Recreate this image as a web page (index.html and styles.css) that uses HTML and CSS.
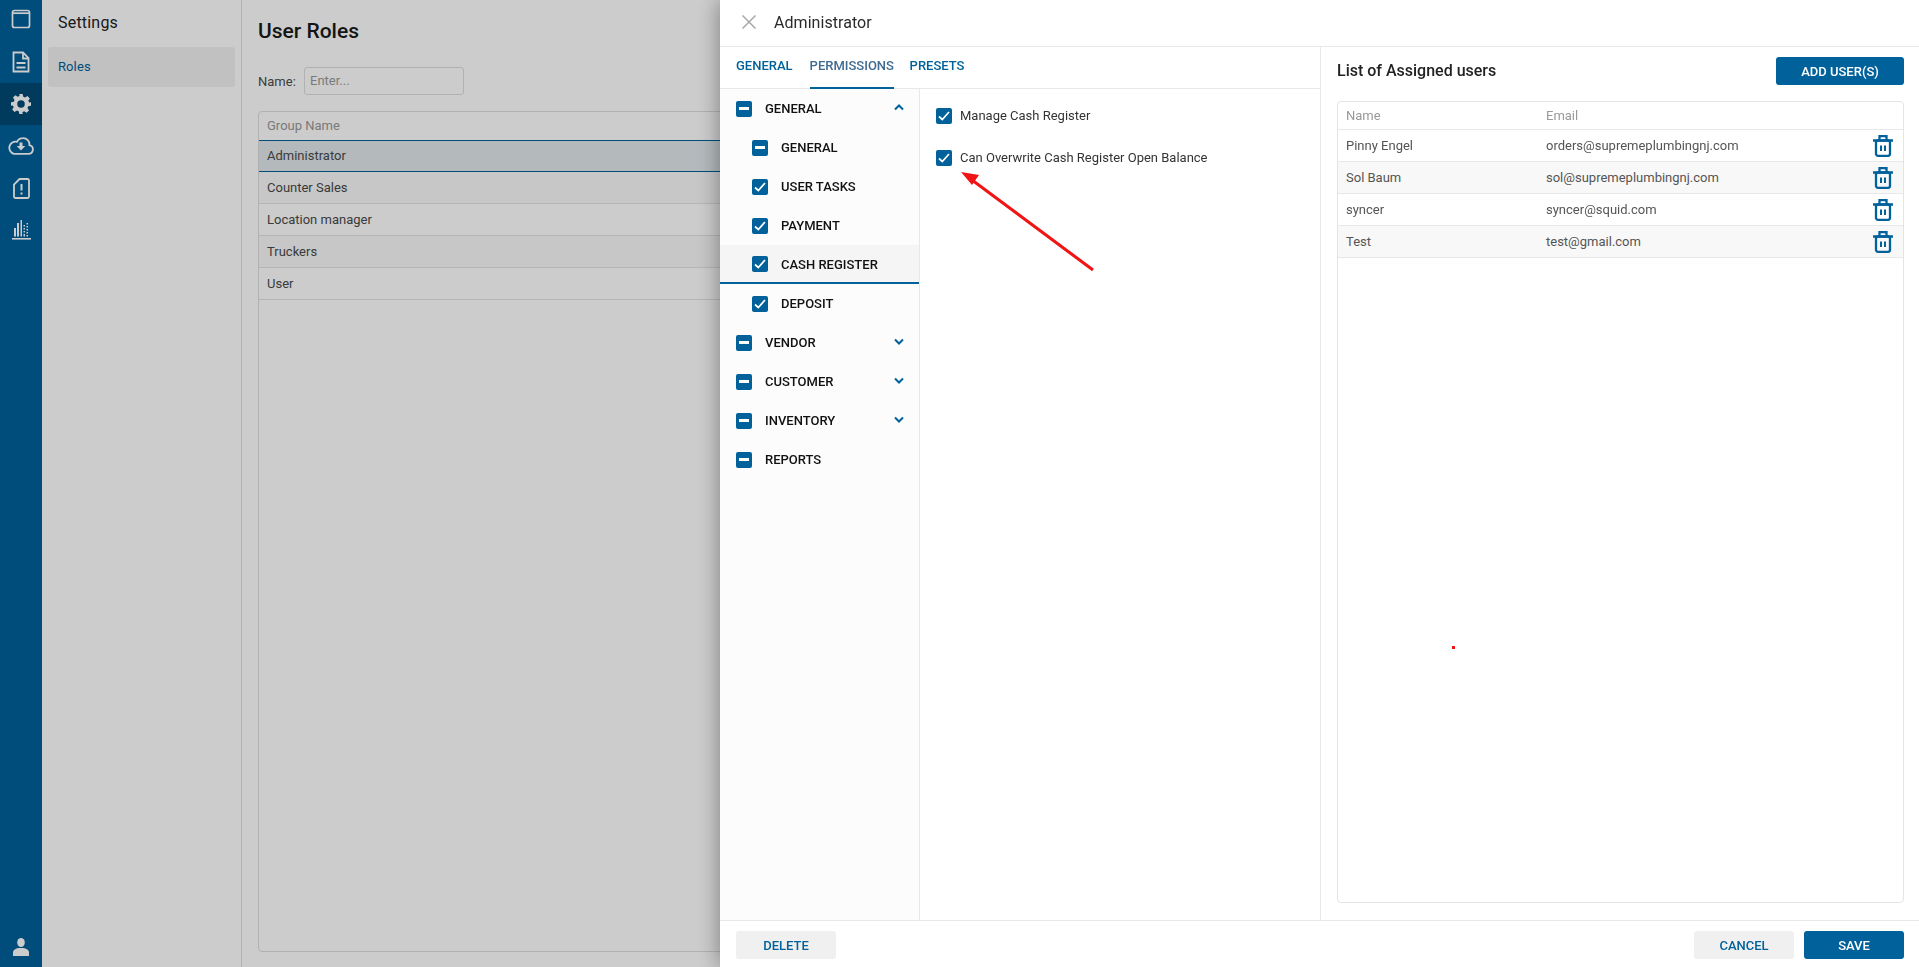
FILE: index.html
```html
<!DOCTYPE html>
<html lang="en">
<head>
<meta charset="utf-8">
<title>User Roles</title>
<link rel="stylesheet" href="styles.css">
</head>
<body>
<div class="app">
  <nav class="rail">
    <div class="rail-top">
      <a class="rail-item first"><svg width="20" height="20" viewBox="0 0 20 20" fill="none" stroke="#ccc" stroke-width="1.7"><rect x="1.5" y="1.5" width="17" height="17" rx="2"/><path d="M1.5 4.2h17"/></svg></a>
      <a class="rail-item"><svg width="18" height="22" viewBox="0 0 18 22" fill="none" stroke="#ccc" stroke-width="1.8"><path d="M1.5 1.5h9.5l5.5 5.5v13.5h-15z"/><path d="M11 1.5v6h5.5" /><path d="M4.5 12h9M4.5 16.5h9" stroke-width="2"/></svg></a>
      <a class="rail-item active"><svg width="20" height="20" viewBox="0 0 24 24"><path fill="#ccc" fill-rule="evenodd" d="M10 0h4l.7 3.3 2.2.9 2.8-1.8 2.9 2.9-1.8 2.8.9 2.2L24 10v4l-3.3.7-.9 2.2 1.8 2.8-2.9 2.9-2.8-1.8-2.2.9L14 24h-4l-.7-3.3-2.2-.9-2.8 1.8-2.9-2.9 1.8-2.8-.9-2.2L0 14v-4l3.3-.7.9-2.2-1.8-2.8 2.9-2.9 2.8 1.8 2.2-.9zM12 7.5a4.5 4.5 0 1 0 0 9 4.5 4.5 0 0 0 0-9z"/></svg></a>
      <a class="rail-item"><svg width="26" height="18" viewBox="0 0 26 18"><path fill="none" stroke="#ccc" stroke-width="1.8" d="M6 16.8h14.5a4.4 4.4 0 0 0 .9-8.7A6.2 6.2 0 0 0 15 1.2a6.8 6.8 0 0 0-6 3.6 5.3 5.3 0 0 0-3 12z"/><path fill="#ccc" d="M11.5 5.5h3v3.5h2.8l-4.3 4.5-4.3-4.5h2.8z"/></svg></a>
      <a class="rail-item"><svg width="17" height="21" viewBox="0 0 17 21" fill="none" stroke="#ccc" stroke-width="1.8"><path d="M6.5 1H14.5a1.5 1.5 0 0 1 1.5 1.5v16a1.5 1.5 0 0 1-1.5 1.5h-12A1.5 1.5 0 0 1 1 18.500V6.500z"/><path d="M8.500 6v6.500M8.500 14.500v2" stroke-width="2"/></svg></a>
      <a class="rail-item"><svg width="19" height="20" viewBox="0 0 19 20" fill="#ccc"><rect x="0" y="18" width="19" height="1.6"/><rect x="2" y="8" width="2" height="8.500"/><rect x="5" y="3" width="2" height="13.500"/><rect x="8.500" y="0" width="1.500" height="16.500"/><path d="M11.500 5h1.500v1.500h-1.500zM11.500 8h1.500v1.500h-1.500zM11.500 11h1.500v1.500h-1.500zM11.500 14h1.500v2.500h-1.500zM14.500 3h1.500v1.500h-1.500zM14.500 6h1.500v1.500h-1.500zM14.500 9h1.500v1.500h-1.500zM14.500 12h1.500v1.500h-1.500zM14.500 15h1.500v1.500h-1.500z"/></svg></a>
    </div>
    <a class="rail-user"><svg width="18" height="18" viewBox="0 0 18 18" fill="#ccc"><ellipse cx="9" cy="4.500" rx="3.800" ry="4.500"/><path d="M1 18v-3.500c0-2.500 3-4 5.500-4.500h5c2.500.5 5.500 2 5.500 4.500V18z"/></svg></a>
  </nav>

  <aside class="settings">
    <h2 class="settings-title">Settings</h2>
    <a class="settings-link">Roles</a>
  </aside>

  <main class="roles">
    <h1 class="roles-title">User Roles</h1>
    <div class="filter">
      <label class="filter-label">Name:</label>
      <div class="filter-input">Enter...</div>
    </div>
    <section class="grid">
      <div class="grid-head">Group Name</div>
      <div class="grid-row selected">Administrator</div>
      <div class="grid-row alt">Counter Sales</div>
      <div class="grid-row">Location manager</div>
      <div class="grid-row alt">Truckers</div>
      <div class="grid-row">User</div>
    </section>
  </main>
</div>

<div class="overlay"></div>

<div class="drawer">
  <header class="drawer-head">
    <svg class="close" width="14" height="14" viewBox="0 0 14 14" fill="none" stroke="#a8a8a8" stroke-width="1.500"><path d="M.5.5l13 13M13.500.5l-13 13"/></svg>
    <span class="drawer-title">Administrator</span>
  </header>
  <div class="drawer-body">
    <div class="col-left">
      <div class="tabs">
        <a class="tab">GENERAL</a>
        <a class="tab active">PERMISSIONS</a>
        <a class="tab">PRESETS</a>
      </div>
      <div class="perm">
        <ul class="tree">
          <li class="node"><span class="box"><i class="dash"></i></span><span class="node-label">GENERAL</span><svg class="chev" width="10" height="7" viewBox="0 0 10 7" fill="none" stroke="#00619b" stroke-width="2"><path d="M1 5.500l4-4 4 4"/></svg></li>
          <li class="node sub"><span class="box"><i class="dash"></i></span><span class="node-label">GENERAL</span></li>
          <li class="node sub"><span class="box"><svg class="tick" width="12" height="10" viewBox="0 0 12 10" fill="none" stroke="#fff" stroke-width="1.700"><path d="M1 5.500l3.300 3L11 1"/></svg></span><span class="node-label">USER TASKS</span></li>
          <li class="node sub"><span class="box"><svg class="tick" width="12" height="10" viewBox="0 0 12 10" fill="none" stroke="#fff" stroke-width="1.700"><path d="M1 5.500l3.300 3L11 1"/></svg></span><span class="node-label">PAYMENT</span></li>
          <li class="node sub current"><span class="box"><svg class="tick" width="12" height="10" viewBox="0 0 12 10" fill="none" stroke="#fff" stroke-width="1.700"><path d="M1 5.500l3.300 3L11 1"/></svg></span><span class="node-label">CASH REGISTER</span></li>
          <li class="node sub"><span class="box"><svg class="tick" width="12" height="10" viewBox="0 0 12 10" fill="none" stroke="#fff" stroke-width="1.700"><path d="M1 5.500l3.300 3L11 1"/></svg></span><span class="node-label">DEPOSIT</span></li>
          <li class="node"><span class="box"><i class="dash"></i></span><span class="node-label">VENDOR</span><svg class="chev" width="10" height="7" viewBox="0 0 10 7" fill="none" stroke="#00619b" stroke-width="2"><path d="M1 1.500l4 4 4-4"/></svg></li>
          <li class="node"><span class="box"><i class="dash"></i></span><span class="node-label">CUSTOMER</span><svg class="chev" width="10" height="7" viewBox="0 0 10 7" fill="none" stroke="#00619b" stroke-width="2"><path d="M1 1.500l4 4 4-4"/></svg></li>
          <li class="node"><span class="box"><i class="dash"></i></span><span class="node-label">INVENTORY</span><svg class="chev" width="10" height="7" viewBox="0 0 10 7" fill="none" stroke="#00619b" stroke-width="2"><path d="M1 1.500l4 4 4-4"/></svg></li>
          <li class="node"><span class="box"><i class="dash"></i></span><span class="node-label">REPORTS</span></li>
        </ul>
        <div class="options">
          <label class="option"><span class="box"><svg class="tick" width="12" height="10" viewBox="0 0 12 10" fill="none" stroke="#fff" stroke-width="1.700"><path d="M1 5.500l3.300 3L11 1"/></svg></span><span class="option-text">Manage Cash Register</span></label>
          <label class="option"><span class="box"><svg class="tick" width="12" height="10" viewBox="0 0 12 10" fill="none" stroke="#fff" stroke-width="1.700"><path d="M1 5.500l3.300 3L11 1"/></svg></span><span class="option-text">Can Overwrite Cash Register Open Balance</span></label>
        </div>
      </div>
    </div>
    <div class="col-right">
      <div class="assign-head">
        <h3 class="assign-title">List of Assigned users</h3>
        <button class="btn primary wide">ADD USER(S)</button>
      </div>
      <div class="users">
        <div class="users-head"><span class="c-name">Name</span><span class="c-mail">Email</span></div>
        <div class="user-row"><span class="c-name">Pinny Engel</span><span class="c-mail">orders@supremeplumbingnj.com</span><svg class="trash" width="20" height="22" viewBox="0 0 20 22" fill="none" stroke="#00619b" stroke-width="2.300"><path d="M0 5.500h20M6.500 5V1.200h7V5"/><rect x="3" y="5.500" width="14" height="15.300" rx="2"/><path d="M8 10.500v5.500M12 10.500v5.500" stroke-width="2"/></svg></div>
        <div class="user-row alt"><span class="c-name">Sol Baum</span><span class="c-mail">sol@supremeplumbingnj.com</span><svg class="trash" width="20" height="22" viewBox="0 0 20 22" fill="none" stroke="#00619b" stroke-width="2.300"><path d="M0 5.500h20M6.500 5V1.200h7V5"/><rect x="3" y="5.500" width="14" height="15.300" rx="2"/><path d="M8 10.500v5.500M12 10.500v5.500" stroke-width="2"/></svg></div>
        <div class="user-row"><span class="c-name">syncer</span><span class="c-mail">syncer@squid.com</span><svg class="trash" width="20" height="22" viewBox="0 0 20 22" fill="none" stroke="#00619b" stroke-width="2.300"><path d="M0 5.500h20M6.500 5V1.200h7V5"/><rect x="3" y="5.500" width="14" height="15.300" rx="2"/><path d="M8 10.500v5.500M12 10.500v5.500" stroke-width="2"/></svg></div>
        <div class="user-row alt"><span class="c-name">Test</span><span class="c-mail">test@gmail.com</span><svg class="trash" width="20" height="22" viewBox="0 0 20 22" fill="none" stroke="#00619b" stroke-width="2.300"><path d="M0 5.500h20M6.500 5V1.200h7V5"/><rect x="3" y="5.500" width="14" height="15.300" rx="2"/><path d="M8 10.500v5.500M12 10.500v5.500" stroke-width="2"/></svg></div>
      </div>
    </div>
  </div>
  <footer class="drawer-foot">
    <button class="btn plain">DELETE</button>
    <div class="foot-actions">
      <button class="btn plain">CANCEL</button>
      <button class="btn primary">SAVE</button>
    </div>
  </footer>
</div>

<svg class="annotation" width="1919" height="967" viewBox="0 0 1919 967">
  <path d="M1093 270L972 180" stroke="#f01414" stroke-width="3" fill="none"/>
  <path d="M961 172l18 3-7 10z" fill="#f01414"/>
  <rect x="1452" y="646" width="3" height="3" fill="#f01414"/>
</svg>
</body>
</html>
```
FILE: styles.css
```css
* { box-sizing: border-box; }
html, body { margin: 0; height: 100%; overflow: hidden; }
body { font-family: Roboto, "Liberation Sans", sans-serif; font-size: 13px; color: #333; background: #fff; }
h1, h2, h3 { margin: 0; font-weight: 400; }
ul { margin: 0; padding: 0; list-style: none; }

.app { display: flex; height: 967px; }

.rail { width: 42px; flex: none; background: #00619b; display: flex; flex-direction: column; justify-content: space-between; }
.rail-item { display: flex; align-items: center; justify-content: center; height: 42px; }
.rail-item.first { height: 41px; padding-bottom: 3px; }
.rail-item.active { background: #004a76; }
.rail-item svg, .rail-user svg { filter: brightness(1.25); }
.rail-user { display: flex; justify-content: center; padding-bottom: 11px; }

.settings { width: 200px; flex: none; border-right: 1px solid #e0e0e0; padding: 0 6px; }
.settings-title { font-size: 16px; color: #222; line-height: 46px; padding-left: 10px; height: 47px; letter-spacing: .2px; }
.settings-link { display: block; height: 40px; line-height: 40px; padding-left: 10px; border-radius: 3px; background: #f2f2f2; color: #00619b; font-size: 13px; letter-spacing: .1px; }

.roles { flex: 1; padding: 0 0 15px 16px; display: flex; flex-direction: column; }
.roles-title { font-size: 21px; font-weight: 500; color: #1a1a1a; line-height: 24px; padding-top: 19px; height: 67px; }
.filter { display: flex; align-items: center; height: 28px; margin-bottom: 16px; }
.filter-label { width: 46px; color: #4d4d4d; }
.filter-input { width: 160px; height: 28px; line-height: 26px; padding-left: 5px; border: 1px solid #dedede; border-radius: 3px; color: #9a9a9a; }
.grid { flex: 1; border: 1px solid #dedede; border-radius: 4px; }
.grid-head { height: 28px; line-height: 27px; padding-left: 8px; color: #999; }
.grid-row { height: 32px; line-height: 31px; padding-left: 8px; border-bottom: 1px solid #e3e3e3; color: #4a4a4a; }
.grid-row.alt { background: #f9f9f9; }
.grid-row.selected { background: #e1e8ec; border-top: 1px solid #00619b; border-bottom: 1px solid #00619b; line-height: 30px; }

.overlay { position: fixed; inset: 0; background: rgba(0, 0, 0, .2); }

.drawer { position: fixed; top: 0; right: 0; bottom: 0; width: 1199px; background: #fff; box-shadow: 0 0 22px rgba(0, 0, 0, .4); display: flex; flex-direction: column; }
.drawer-head { height: 47px; flex: none; border-bottom: 1px solid #e8e8e8; display: flex; align-items: center; padding: 0 0 2px 22px; }
.close { margin-right: 18px; }
.drawer-title { font-size: 16px; color: #2a2a2a; letter-spacing: .05px; }

.drawer-body { flex: 1; display: flex; min-height: 0; }
.col-left { width: 601px; flex: none; border-right: 1px solid #e8e8e8; display: flex; flex-direction: column; }
.tabs { height: 42px; flex: none; display: flex; gap: 17px; padding-left: 16px; border-bottom: 1px solid #e8e8e8; }
.tab { font-size: 13px; font-weight: 500; color: #00619b; line-height: 38px; height: 42px; white-space: nowrap; }
.tab.active { color: #3f6b91; border-bottom: 2px solid #00619b; width: 84px; margin-right: -1px; }

.perm { flex: 1; display: flex; }
.tree { width: 200px; flex: none; background: #fcfcfc; border-right: 1px solid #e8e8e8; }
.node { height: 39px; display: flex; align-items: center; padding-left: 16px; font-weight: 500; color: #111; position: relative; }
.node.sub { padding-left: 32px; }
.node.current { background: #f5f5f5; box-shadow: inset 0 -2px 0 #00619b; padding-bottom: 1px; }
.node-label { margin-left: 13px; }
.chev { position: absolute; right: 15px; top: 15px; }
.box { width: 16px; height: 16px; flex: none; border-radius: 2px; background: #00619b; display: flex; align-items: center; justify-content: center; }
.dash { width: 10px; height: 3px; background: #fff; }

.options { padding: 8px 0 0 16px; display: flex; flex-direction: column; gap: 4px; }
.option { display: flex; align-items: center; gap: 8px; height: 38px; color: #333; }
.option-text { margin-bottom: 1px; }

.col-right { flex: 1; padding: 0 15px 17px 16px; display: flex; flex-direction: column; min-width: 0; }
.assign-head { height: 54px; flex: none; display: flex; align-items: flex-start; justify-content: space-between; }
.assign-title { font-size: 16px; font-weight: 500; color: #222; line-height: 20px; padding-top: 14px; }
.users { flex: 1; border: 1px solid #e4e4e4; border-radius: 4px; }
.users-head { height: 28px; display: flex; align-items: center; color: #999; border-bottom: 1px solid #e8e8e8; }
.user-row { height: 32px; display: flex; align-items: center; color: #555; border-bottom: 1px solid #e8e8e8; position: relative; }
.user-row.alt { background: #f8f8f8; }
.c-name { width: 208px; padding-left: 8px; flex: none; }
.trash { position: absolute; right: 10px; top: 5px; }

.drawer-foot { height: 47px; flex: none; border-top: 1px solid #e8e8e8; display: flex; justify-content: space-between; align-items: center; padding: 2px 15px 0 16px; }
.foot-actions { display: flex; gap: 10px; }
.btn { width: 100px; height: 28px; border: 0; border-radius: 3px; font-family: inherit; font-size: 13px; font-weight: 500; padding: 0; }
.btn.plain { background: #f0f0f0; color: #00619b; }
.btn.primary { background: #00619b; color: #fff; }
.btn.wide { width: 128px; height: 28px; margin-top: 10px; }

.annotation { position: fixed; left: 0; top: 0; pointer-events: none; }
```
